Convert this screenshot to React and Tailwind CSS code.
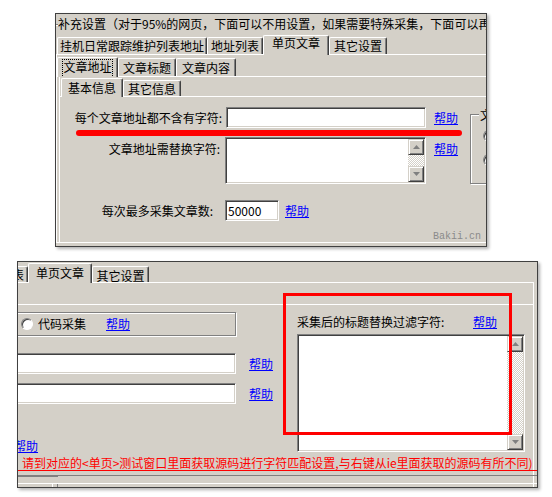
import React from "react";

const ui = "font-['Noto_Sans_CJK_SC',sans-serif] text-[12px] leading-[14px] text-black";

const tabBase =
  "relative flex shrink-0 justify-center overflow-hidden whitespace-nowrap rounded-t-[2px] border-t border-l border-r border-white border-r-[#404040] bg-[#d4d0c8] shadow-[inset_-1px_0_0_#808080]";

const sunken =
  "border border-t-[#808080] border-l-[#808080] border-r-white border-b-white bg-white shadow-[inset_1px_1px_0_#404040,inset_-1px_-1px_0_#d4d0c8]";

const raised =
  "border border-t-[#d4d0c8] border-l-[#d4d0c8] border-r-[#404040] border-b-[#404040] bg-[#d4d0c8] shadow-[inset_1px_1px_0_#ffffff,inset_-1px_-1px_0_#808080]";

const etched = "border border-[#808080] shadow-[1px_1px_0_#ffffff,inset_1px_1px_0_#ffffff]";

function Tab({ children, className = "", selected = false, focus = false }) {
  return (
    <div className={`${tabBase} ${selected ? "z-10 -mb-px" : ""} ${className}`}>
      {focus ? (
        <span className="outline-1 outline-dotted outline-black">{children}</span>
      ) : (
        children
      )}
    </div>
  );
}

function Help({ className = "" }) {
  return <span className={`shrink-0 whitespace-nowrap text-[#0000ff] underline ${className}`}>帮助</span>;
}

function Arrow({ up = false }) {
  return (
    <svg width="7" height="4" viewBox="0 0 7 4">
      <path d={up ? "M3.5 0L7 4H0z" : "M0 0H7L3.5 4z"} fill="#808080" />
    </svg>
  );
}

function VScroll() {
  return (
    <div className="flex h-full w-[16px] shrink-0 flex-col">
      <div className={`${raised} flex h-[16px] shrink-0 items-center justify-center`}>
        <Arrow up />
      </div>
      <div className="flex-1 bg-[image:repeating-conic-gradient(#ffffff_0_25%,#d4d0c8_0_50%)] bg-[length:2px_2px]" />
      <div className={`${raised} flex h-[16px] shrink-0 items-center justify-center`}>
        <Arrow />
      </div>
    </div>
  );
}

function Radio({ className = "" }) {
  return (
    <div
      className={`h-[12px] w-[12px] shrink-0 rounded-full border border-t-[#808080] border-l-[#808080] border-r-white border-b-white bg-white shadow-[inset_1px_1px_0_#404040] ${className}`}
    />
  );
}

function TopPanel() {
  return (
    <div className="relative ml-[55px] flex h-[234px] w-[432px] flex-col overflow-hidden border border-[#404040] bg-[#d4d0c8] shadow-[2px_2px_3px_rgba(0,0,0,0.3)]">
      {/* group title line */}
      <div className="flex h-[23px] shrink-0 items-start whitespace-nowrap pt-[3px]">
        <div className="mt-[7px] h-[2px] w-[2px] shrink-0 border-t border-b border-t-[#808080] border-b-white" />
        <span>补充设置（对于95%的网页，下面可以不用设置，如果需要特殊采集，下面可以再</span>
      </div>

      <div className="flex h-[17px] shrink-0 items-end pl-[1px]">
        <Tab className="h-[17px] w-[150px] pt-[1px]">挂机日常跟踪维护列表地址</Tab>
        <Tab className="h-[17px] w-[56px] pt-[1px]">地址列表</Tab>
        <Tab selected className="h-[20px] w-[66px] pt-0">单页文章</Tab>
        <Tab className="h-[17px] w-[58px] pt-[1px]">其它设置</Tab>
      </div>

      <div className="flex w-[520px] flex-1 flex-col border-t border-l border-white">
        <div className="mt-[3px] flex h-[18px] shrink-0 items-end">
          <Tab selected focus className="h-[20px] w-[61px] pt-[2px]">文章地址</Tab>
          <Tab className="h-[18px] w-[58px] pt-[2px]">文章标题</Tab>
          <Tab className="h-[18px] w-[60px] pt-[2px]">文章内容</Tab>
        </div>

        <div className="ml-[2px] flex flex-1 flex-col border-t border-l border-white">
          <div className="mt-[3px] flex h-[16px] shrink-0 items-end pl-[1px]">
            <Tab selected className="h-[19px] w-[62px] pt-[2px]">基本信息</Tab>
            <Tab className="h-[16px] w-[58px] pt-[1px]">其它信息</Tab>
          </div>

          <div className="flex flex-1 border-t border-white">
            <div className="flex w-[410px] shrink-0 flex-col">
              <div className="mt-[10px] flex items-center">
                <div className="w-[166px] shrink-0 whitespace-nowrap pr-[4px] text-right">每个文章地址都不含有字符:</div>
                <div className={`${sunken} h-[21px] w-[200px] shrink-0`} />
                <Help className="ml-[8px]" />
              </div>

              <div className="mt-[9px] flex items-start">
                <div className="w-[165px] shrink-0 whitespace-nowrap pr-[5px] pt-[5px] text-right">文章地址需替换字符:</div>
                <div className={`${sunken} flex h-[47px] w-[201px] shrink-0 justify-end p-[1px]`}>
                  <VScroll />
                </div>
                <Help className="ml-[8px] pt-[5px]" />
              </div>

              <div className="mt-[16px] flex items-center">
                <div className="w-[165px] shrink-0 whitespace-nowrap pr-[12px] text-right">每次最多采集文章数:</div>
                <div className={`${sunken} flex h-[21px] w-[54px] shrink-0 items-center pl-[2px]`}>50000</div>
                <Help className="ml-[6px]" />
              </div>
            </div>

            <div className={`${etched} relative mt-[17px] h-[70px] w-[60px] shrink-0`}>
              <span className="absolute -top-[7px] left-[8px] bg-[#d4d0c8] px-[1px]">文</span>
              <Radio className="ml-[12px] mt-[15px]" />
              <Radio className="ml-[12px] mt-[12px]" />
            </div>
          </div>
        </div>
      </div>

      <div className="h-[4px] shrink-0 border-t border-white" />

      <span className="absolute bottom-[4px] right-[5px] font-['Liberation_Mono',monospace] text-[10px] leading-[10px] text-[#8a8a8a]">
        Bakii.cn
      </span>

      {/* annotation */}
      <div className="absolute left-[20px] top-[116px] h-[6px] w-[386px] rounded-full bg-[#ff0000]" />
    </div>
  );
}

function BottomPanel() {
  return (
    <div className="relative ml-[17px] mt-[14px] flex h-[227px] w-[521px] flex-col overflow-hidden border border-[#404040] bg-[#d4d0c8] shadow-[2px_2px_3px_rgba(0,0,0,0.3)]">
      <div className="flex h-[20px] shrink-0 items-end">
        <Tab className="-ml-[46px] h-[16px] w-[56px] pt-[1px]">地址列表</Tab>
        <Tab selected className="h-[20px] w-[64px] pt-[2px]">单页文章</Tab>
        <Tab className="h-[16px] w-[57px] pt-[2px]">其它设置</Tab>
      </div>

      <div className="flex w-[516px] flex-1 flex-col border-t border-r border-white">
        <div className="h-[21px] shrink-0" />
        <div className="flex flex-1 flex-col border-t border-white">
          <div className="flex">
            <div className="flex w-[279px] shrink-0 flex-col">
              <div className={`${etched} -ml-[10px] mt-[7px] flex h-[24px] w-[228px] items-center`}>
                <Radio className="ml-[12px]" />
                <span className="ml-[5px] whitespace-nowrap">代码采集</span>
                <Help className="ml-[20px]" />
              </div>
              <div className="mt-[17px] flex items-center">
                <div className={`${sunken} -ml-[10px] h-[21px] w-[228px] shrink-0`} />
                <Help className="ml-[13px]" />
              </div>
              <div className="mt-[9px] flex items-center">
                <div className={`${sunken} -ml-[10px] h-[21px] w-[228px] shrink-0`} />
                <Help className="ml-[13px]" />
              </div>
              <Help className="-ml-[4px] mt-[35px] self-start" />
            </div>

            <div className="flex w-[236px] shrink-0 flex-col">
              <div className="mt-[10px] flex">
                <div className="w-[176px] shrink-0 whitespace-nowrap">采集后的标题替换过滤字符:</div>
                <Help />
              </div>
              <div className={`${sunken} mt-[5px] flex h-[118px] w-[228px] justify-end p-[1px]`}>
                <VScroll />
              </div>
            </div>
          </div>

          <div className="mt-[3px] h-[15px] w-[520px] shrink-0 overflow-hidden whitespace-nowrap border-b border-[#ff0000] pl-[4px] text-[#ff0000]">
            请到对应的&lt;单页&gt;测试窗口里面获取源码进行字符匹配设置,与右键从ie里面获取的源码有所不同)
          </div>

          <div className="mt-[4px] h-[8px] w-[520px] shrink-0 border-t border-[#808080]">
            <div className="h-[1px] w-[40px] bg-[#808080]" />
          </div>
          <div className="flex h-[4px] w-[520px] shrink-0 border-t border-white">
            <div className="ml-[34px] h-full w-[6px] border-l border-r border-l-white border-r-[#808080]" />
          </div>
        </div>
      </div>

      {/* annotation */}
      <div className="absolute left-[265px] top-[31px] h-[142px] w-[229px] border-[3px] border-[#ff0000]" />
    </div>
  );
}

export default function App() {
  return (
    <div className={`${ui} h-[497px] w-[552px] overflow-hidden bg-white pt-[13px]`}>
      <TopPanel />
      <BottomPanel />
    </div>
  );
}
